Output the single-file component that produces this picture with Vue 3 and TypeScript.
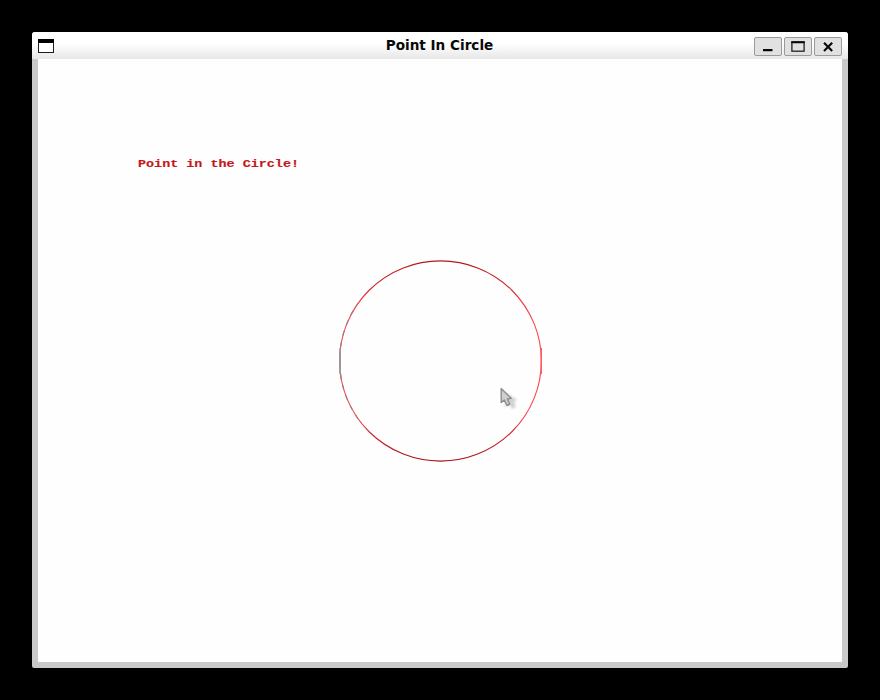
<script setup lang="ts">
const title = 'Point In Circle'
const message = 'Point in the Circle!'
</script>

<template>
  <main class="desktop">
    <section class="window">
      <header class="titlebar">
        <svg class="app-icon" width="16" height="14" viewBox="0 0 16 14">
          <rect x="0.5" y="0.5" width="15" height="13" fill="#fff" stroke="#1c1a1c" />
          <path d="M0 0H16V4H0Z" fill="#000" />
        </svg>
        <h1 class="title">{{ title }}</h1>
        <div class="controls">
          <button class="control" aria-label="Minimize">
            <svg width="26" height="17" viewBox="0 0 26 17"><path d="M8 11H17.5V13.3H8Z" fill="#080808" /></svg>
          </button>
          <button class="control" aria-label="Maximize">
            <svg width="26" height="17" viewBox="0 0 26 17">
              <rect x="6.9" y="4" width="12.2" height="9.2" fill="none" stroke="#222" stroke-width="1.3" />
              <path d="M6.3 3.3H19.7V5.2H6.3Z" fill="#080808" />
            </svg>
          </button>
          <button class="control" aria-label="Close">
            <svg width="26" height="17" viewBox="0 0 26 17"><path d="M9 4.7L17.2 12.9M17.2 4.7L9 12.9" fill="none" stroke="#080808" stroke-width="2.1" /></svg>
          </button>
        </div>
      </header>
      <svg class="canvas" width="804" height="603" viewBox="38 59 804 603">
        <defs>
          <linearGradient id="arc" x1="0" y1="261" x2="0" y2="461" gradientUnits="userSpaceOnUse">
            <stop offset="0" stop-color="#b5161c" />
            <stop offset="0.12" stop-color="#cc2a31" />
            <stop offset="0.25" stop-color="#f84a50" />
            <stop offset="0.75" stop-color="#f84a50" />
            <stop offset="0.88" stop-color="#c9252b" />
            <stop offset="1" stop-color="#a91118" />
          </linearGradient>
          <clipPath id="left"><rect x="338" y="300" width="20" height="122" /></clipPath>
          <filter id="soft" x="-50%" y="-50%" width="200%" height="200%"><feGaussianBlur stdDeviation="1" /></filter>
        </defs>
        <text class="message" x="138" y="166.5" textLength="161" lengthAdjust="spacingAndGlyphs">{{ message }}</text>
        <g fill="none" stroke-width="1.15">
          <ellipse cx="440.5" cy="361" rx="100.9" ry="100.1" stroke="url(#arc)" />
          <ellipse cx="440.5" cy="361" rx="100.9" ry="100.1" stroke="#987f84" stroke-dasharray="5 6" clip-path="url(#left)" />
        </g>
        <path d="M339.2 348H341V374H339.2Z" fill="#a39499" />
        <path d="M540.5 348H542V374H540.5Z" fill="#ff5d63" />
        <g stroke-linejoin="round">
          <path d="M505 392V407L509 404L512 409L516 407L514 402L517 400Z" fill="#bbb" opacity="0.65" filter="url(#soft)" />
          <path d="M501.2 388.5V402.5L504.3 400L507 405.5L509.8 404.2L507.4 399L511.2 398.3Z" fill="#d0d0d0" stroke="#8d8d8d" stroke-width="1.4" />
        </g>
      </svg>
    </section>
  </main>
</template>

<style>
body { margin: 0; background: #000; }
</style>

<style scoped>
.desktop {
  box-sizing: border-box;
  width: 880px;
  height: 700px;
  padding: 32px;
  background: #000;
}
.window {
  box-sizing: border-box;
  width: 816px;
  height: 636px;
  overflow: hidden;
  border-radius: 3px 3px 2px 2px;
  background: #c9c9c9;
}
.titlebar {
  box-sizing: border-box;
  display: grid;
  grid-template-columns: 88px 1fr 88px;
  align-items: center;
  height: 27px;
  padding: 0 6px;
  background: linear-gradient(#fff 0%, #fff 42%, #e7e7e7 100%);
}
.app-icon { display: block; margin-top: 1px; }
.title {
  margin: -2px 1px 0 0;
  text-align: center;
  white-space: nowrap;
  font: bold 13.6px/26px "DejaVu Sans", sans-serif;
  color: #080808;
}
.controls { display: flex; justify-content: flex-end; gap: 2px; margin-top: 1px; }
.control {
  box-sizing: border-box;
  width: 28px;
  height: 19px;
  padding: 0;
  border: 1px solid #9b9b9b;
  border-radius: 2px;
  background: #e1e1e1;
}
.control svg { display: block; }
.canvas { display: block; margin-left: 6px; background: #fefefe; }
.message { font: bold 10.5px "Liberation Mono", monospace; fill: #c5161c; stroke: #c5161c; stroke-width: 0.15px; }
</style>
